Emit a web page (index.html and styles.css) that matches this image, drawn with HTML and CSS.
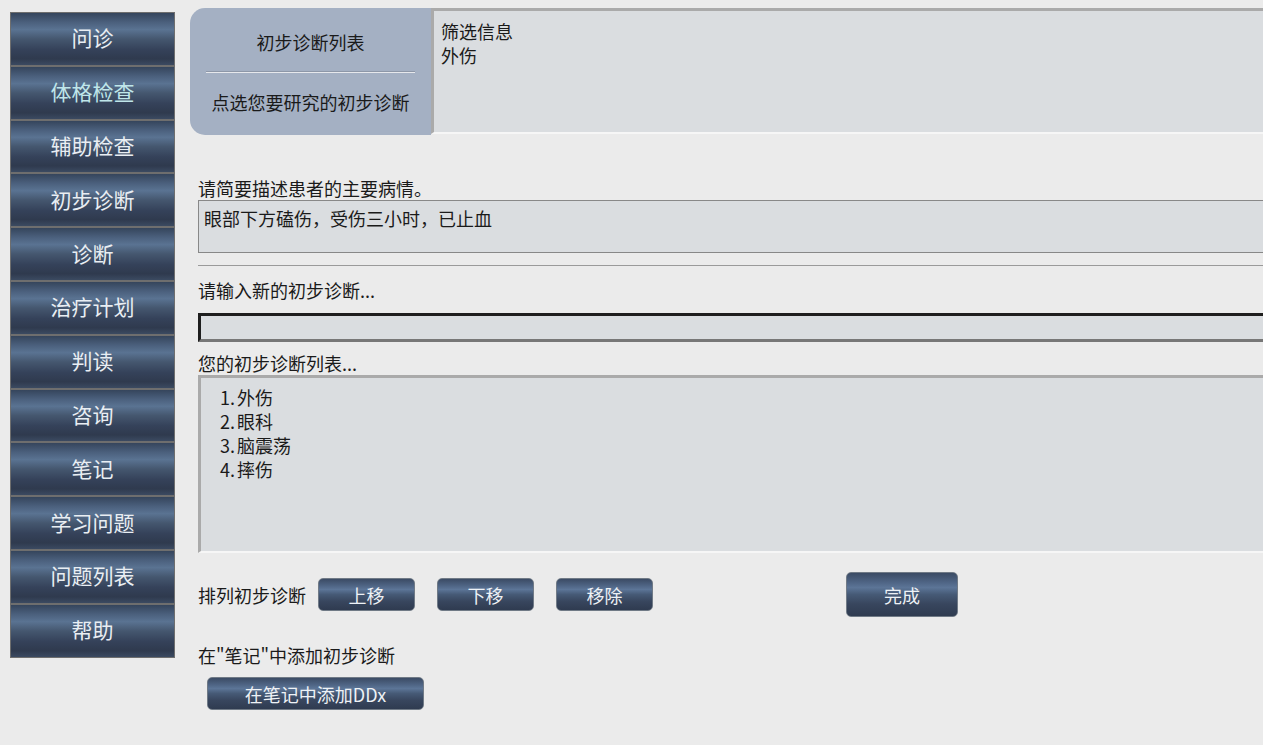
FILE: index.html
```html
<!DOCTYPE html>
<html lang="zh-CN">
<head>
  <meta charset="UTF-8" />
  <title>初步诊断</title>
  <link rel="stylesheet" href="styles.css">
</head>
<body>
  <aside class="sidebar">
    <a href="#">问诊</a>
    <a href="#" class="visited">体格检查</a>
    <a href="#">辅助检查</a>
    <a href="#">初步诊断</a>
    <a href="#">诊断</a>
    <a href="#">治疗计划</a>
    <a href="#">判读</a>
    <a href="#">咨询</a>
    <a href="#">笔记</a>
    <a href="#">学习问题</a>
    <a href="#">问题列表</a>
    <a href="#">帮助</a>
  </aside>

  <main class="content">
    <div class="top-panel">
      <div class="tab">
        <div class="tab-title">初步诊断列表</div>
        <div class="tab-line"></div>
        <div class="tab-sub">点选您要研究的初步诊断</div>
      </div>
      <div class="filter">
        <div>筛选信息</div>
        <div>外伤</div>
      </div>
    </div>

    <section class="form">
      <label class="label first">请简要描述患者的主要病情。</label>
      <div class="summary">眼部下方磕伤，受伤三小时，已止血</div>
      <div class="rule"></div>

      <label class="label second">请输入新的初步诊断...</label>
      <input type="text" class="new-ddx">

      <label class="label third">您的初步诊断列表...</label>
      <ol class="ddx-list">
        <li>外伤</li>
        <li>眼科</li>
        <li>脑震荡</li>
        <li>摔伤</li>
      </ol>

      <div class="order-row">
        <span>排列初步诊断</span>
        <button class="btn small">上移</button>
        <button class="btn small">下移</button>
        <button class="btn small">移除</button>
        <button class="btn done">完成</button>
      </div>

      <label class="label notes">在"笔记"中添加初步诊断</label>
      <button class="btn notes-btn">在笔记中添加DDx</button>
    </section>
  </main>
</body>
</html>
```

FILE: styles.css
```css
body {
  margin: 0;
  background-color: #ebebeb;
  font-family: "Noto Sans CJK SC", "Noto Sans", sans-serif;
  color: #1a1a1a;
  display: flex;
  align-items: flex-start;
  overflow: hidden;
}

.sidebar {
  margin: 12px 0 0 10px;
  width: 163px;
  border: 1px solid #6e6e6e;
  background: #6e6e6e;
  display: flex;
  flex-direction: column;
  gap: 2px;
}
.sidebar a {
  height: 51.8px;
  box-sizing: border-box;
  padding-bottom: 3px;
  display: flex;
  align-items: center;
  justify-content: center;
  font-size: 21px;
  color: #e9eef3;
  text-decoration: none;
  background: linear-gradient(to bottom, #35455c 0%, #4b607d 18%, #5a7392 32%, #45576f 50%, #35425a 70%, #2f3a4e 88%, #3b4a61 100%);
}
.sidebar a.visited {
  color: #bfe6ea;
}

.content {
  flex: 1;
  margin-left: 15px;
  min-width: 0;
}

.top-panel {
  display: flex;
  margin-top: 8px;
  align-items: flex-start;
}
.tab {
  width: 241px;
  height: 127px;
  flex-shrink: 0;
  background: #a4b0c3;
  border-radius: 15px 0 0 15px;
  display: flex;
  flex-direction: column;
  align-items: center;
  font-size: 18px;
}
.tab-title {
  margin-top: 22px;
  line-height: 24px;
}
.tab-line {
  width: 209px;
  height: 2px;
  margin-top: 17px;
  background: #e6e8ec;
  border-top: 1px solid #8d97a8;
  box-sizing: border-box;
}
.tab-sub {
  margin-top: 17px;
  line-height: 24px;
}
.filter {
  flex: 1;
  background: #dadde0;
  border-top: 3px solid #aaaaaa;
  border-left: 3px solid #aaaaaa;
  border-bottom: 2px solid #f6f6f6;
  padding: 8px 0 0 7px;
  box-sizing: border-box;
  height: 126px;
  font-size: 18px;
  line-height: 24px;
}

.form {
  margin-left: 8px;
  font-size: 18px;
}
.label {
  display: block;
  line-height: 24px;
}
.label.first {
  margin-top: 41px;
}
.summary {
  height: 53px;
  box-sizing: border-box;
  background: #dadde0;
  border: 1px solid #888888;
  border-right: none;
  padding: 5px 0 0 5px;
  line-height: 24px;
}
.rule {
  height: 1px;
  background: #9a9a9a;
  margin-top: 12px;
}
.label.second {
  margin-top: 12px;
}
.new-ddx {
  display: block;
  width: 100%;
  height: 29px;
  box-sizing: border-box;
  margin: 11px 0 0;
  background: #dadde0;
  border: none;
  border-top: 3px solid #1e1e1e;
  border-left: 3px solid #1e1e1e;
  border-bottom: 3px solid #777777;
  padding: 0;
  outline: none;
}
.label.third {
  margin-top: 10px;
  line-height: 23px;
}
.ddx-list {
  margin: 0;
  height: 178px;
  box-sizing: border-box;
  background: #dadde0;
  border-top: 3px solid #aaaaaa;
  border-left: 3px solid #aaaaaa;
  border-bottom: 2px solid #f6f6f6;
  padding: 7px 0 0 19px;
  line-height: 24px;
  list-style: none;
  counter-reset: ddx;
}
.ddx-list li {
  counter-increment: ddx;
}
.ddx-list li::before {
  content: counter(ddx) ".";
  margin-right: 2px;
}

.order-row {
  display: flex;
  align-items: center;
  margin-top: 19px;
  height: 45px;
}
.order-row span {
  margin-right: 12px;
}

.btn {
  font-family: inherit;
  font-size: 18px;
  color: #eef2f6;
  border: 1px solid #707a86;
  border-radius: 5px;
  background: linear-gradient(to bottom, #3b4b64 0%, #4f6585 22%, #5c7597 34%, #465a76 50%, #38465e 72%, #2f3b50 100%);
  cursor: pointer;
  padding: 0;
}
.btn.small {
  width: 97px;
  height: 33px;
  margin-right: 22px;
}
.btn.done {
  width: 112px;
  height: 45px;
  margin-left: 171px;
}
.label.notes {
  margin-top: 26px;
}
.btn.notes-btn {
  display: block;
  width: 217px;
  height: 33px;
  margin: 10px 0 0 9px;
}
```
